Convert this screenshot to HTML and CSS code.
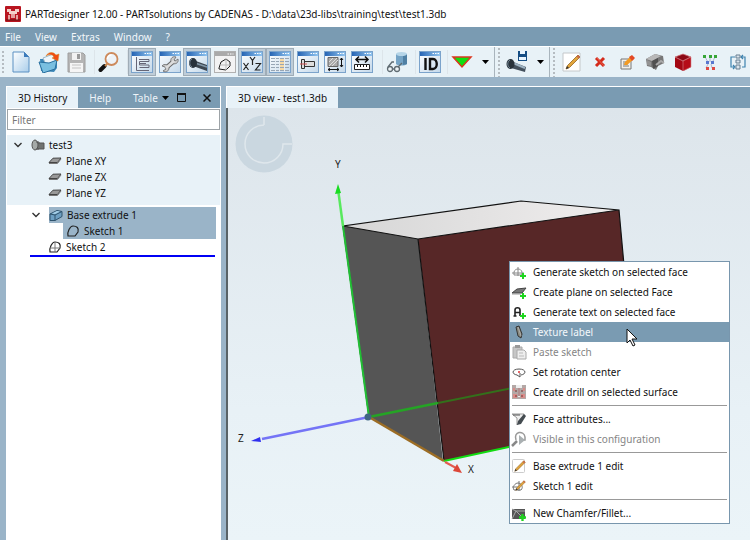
FILE: index.html
```html
<!DOCTYPE html>
<html lang="en">
<head>
<meta charset="utf-8">
<title>PARTdesigner 12.00</title>
<link rel="stylesheet" href="styles.css">
</head>
<body>
<svg class="defs" aria-hidden="true">
  <defs>
    <linearGradient id="paper" x1="0" y1="0" x2="1" y2="1"><stop offset="0" stop-color="#fff"/><stop offset="1" stop-color="#a9cdea"/></linearGradient>
    <linearGradient id="bar" x1="0" x2="1"><stop offset="0" stop-color="#2765b4"/><stop offset="1" stop-color="#8fc4f0"/></linearGradient>
    <linearGradient id="pane" x1="0" y1="0" x2="1" y2="1"><stop offset="0" stop-color="#fff"/><stop offset="1" stop-color="#c3d8ea"/></linearGradient>
    <linearGradient id="top" x1="0" x2="1"><stop offset="0" stop-color="#d6d6d6"/><stop offset="1" stop-color="#f0eeee"/></linearGradient>
    <symbol id="win" viewBox="0 0 22 22"><rect x=".5" y=".5" width="21" height="21" fill="url(#pane)" stroke="#7ba3cb"/><rect x="1" y="1" width="20" height="4" fill="url(#bar)"/><path d="M13.500 2.500h1.500m1 0h1.500m1 0h1.500" stroke="#fff"/></symbol>
    <symbol id="plus" viewBox="0 0 6 6"><path d="M3 0v6M0 3h6" stroke="#1fd51f" stroke-width="2"/></symbol>
    <symbol id="plane" viewBox="0 0 14 8"><path d="M1 5.500 5 1.200 13 1 9.500 5.500Z" fill="#999" stroke="#444"/><path d="M1 6.500 9.500 6.500 13 2" fill="none" stroke="#777"/></symbol>
    <symbol id="chev" viewBox="0 0 8 6"><path d="m.5 1 3.500 3.500L7.500 1" fill="none" stroke="#333" stroke-width="1.400"/></symbol>
    <symbol id="pencil" viewBox="0 0 16 16"><path d="m1 15 1.500-3.500L13 1l2 2L4.500 13.500Z" fill="#e2a53b" stroke="#946522" stroke-width=".800"/><path d="m11.500 2.500 2 2L15 3l-2-2Z" fill="#c96a4b"/><path d="m1 15 1-3 2 2Z" fill="#333"/></symbol>
  </defs>
</svg>
<div class="app">
  <header class="title">
    <svg width="16" height="16" viewBox="0 0 16 16"><rect width="16" height="16" rx="1" fill="#b91520"/><path d="M2 3h4v2h4V3h4v3h-2v2H4V6H2Z" fill="#f3cfc9"/><path d="M4 9v5M7 8v4M9 8v4M12 9v5" stroke="#f3cfc9" stroke-width="1.500"/><path d="M1 14h14" stroke="#601010"/></svg>
    <span>PARTdesigner 12.00 - PARTsolutions by CADENAS - D:\data\23d-libs\training\test\test1.3db</span>
  </header>
  <nav class="menubar">
    <button>File</button><button>View</button><button>Extras</button><button>Window</button><button>?</button>
  </nav>
  <div class="toolbar" role="toolbar">
    <span class="grip"></span>
    <button class="tool wide" aria-label="New"><svg width="18" height="22" viewBox="0 0 18 22"><path d="M1 1h11l5 5v15H1Z" fill="url(#paper)" stroke="#5b90c2"/><path d="M12 1v5h5Z" fill="#3c7bbb"/></svg></button>
    <button class="tool wide" aria-label="Open"><svg width="22" height="22" viewBox="0 0 22 22"><path d="M2 8h6l2-2 9-1v12l-3 4-13-1Z" fill="#3d88b8"/><path d="m5 7 10-4 3 9-9 4Z" fill="#eef6fb" stroke="#9ab6c9"/><path d="m1 11 10 1 8-3-2 9-12 4Z" fill="#79bfe0" stroke="#276e9e"/><path d="M8 5c2-4 7-5 10-1l3-1-1 7-6-3 2-1c-2-3-5-3-8-1Z" fill="#f04c13" stroke="#d68a25" stroke-width=".500"/></svg></button>
    <button class="tool" aria-label="Save"><svg width="19" height="22" viewBox="0 0 19 22"><path d="M1 2h15l2 2v17H1Z" fill="#b5b5b5" stroke="#9e9e9e"/><path d="M5 2h9v7H5Z" fill="#f2f2f2"/><path d="M10 3h3v5h-3Z" fill="#999"/><path d="M3 12h13v9H3Z" fill="#f5f5f5"/><path d="M5 14h9m-9 3h9" stroke="#c3c3c3"/></svg></button>
    <span class="sep"></span>
    <button class="tool wide" aria-label="Search"><svg width="22" height="22" viewBox="0 0 22 22"><path d="m2.500 19 4-4" stroke="#111" stroke-width="4" stroke-linecap="round"/><path d="m7 15 3-3" stroke="#c98a50" stroke-width="2"/><circle cx="13.500" cy="8" r="6" fill="#edf3f8" stroke="#cd8a5c" stroke-width="1.800"/><path d="M9.500 8a4 4 0 0 1 4-4" fill="none" stroke="#fff" stroke-width="1.500"/></svg></button>
    <span class="sep"></span>
    <button class="tool wide on" aria-label="History"><svg width="22" height="22"><use href="#win"/><path d="M5.500 6v13.500H18M8 8.500h10v2H8.500v3.500H18v2.500H8.500M9 12.500h6" fill="none" stroke="#667"/></svg></button>
    <button class="tool" aria-label="Settings"><svg width="22" height="22"><use href="#win"/><path d="m8 16 7-6" stroke="#666" stroke-width="4.500"/><path d="M3 15c2-3 7-1 7 2s-3 5-6 3l3-2-1-2ZM12 11c-1-4 2-6 5-5l-2 3 1 1 3-2c1 4-3 6-6 4Z" fill="#ccc" stroke="#666" stroke-width=".800"/><path d="m7 17 8-7" stroke="#ddd" stroke-width="2.500"/></svg></button>
    <button class="tool wide on" aria-label="Preview"><svg width="22" height="22"><use href="#win"/><path d="m7 9 14 5v6L7 15Z" fill="#3d4650"/><path d="m9 12 12 4" stroke="#8195a6" stroke-width="1.500"/><ellipse cx="7" cy="12" rx="4" ry="5" fill="#28313a"/><path d="M6 8c-3 2-3 6 0 8" fill="none" stroke="#6f8292"/></svg></button>
    <button class="tool" aria-label="Sketch"><svg width="22" height="22" viewBox="0 0 22 22"><rect x=".5" y=".5" width="21" height="21" fill="#f3f3f3" stroke="#b1b1b1"/><path d="M1 1h20v4H1Z" fill="#aaa"/><path d="M13.500 3h6" stroke="#fff" stroke-dasharray="1.500 1"/><path d="m5 17 2-6 5-3 4 3v4l-4 4-7-1Z" fill="none" stroke="#222"/><path d="M12 8v11m-6-5h10" stroke="#bbb"/></svg></button>
    <button class="tool wide on" aria-label="Axes"><svg width="22" height="22"><use href="#win"/><path d="m2.500 12 5 7m0-7-5 7M9 6l2.500 3.500L14 6m-2.500 3.500V14M14.500 12.500h5l-5 6.500h5" fill="none" stroke="#222" stroke-width="1.200"/></svg></button>
    <button class="tool wide on" aria-label="Table"><svg width="22" height="22"><use href="#win"/><path d="M11 7h5v13h-5Z" fill="#f6d9a5"/><path d="M2 7.500h18M2 10.500h18M2 13.500h18M2 16.500h18M2 19.500h18" stroke="#98a6b5"/><path d="M6.500 6v15m4-15v15m5-15v15" stroke="#e6edf3"/></svg></button>
    <button class="tool" aria-label="Part view"><svg width="22" height="22"><use href="#win"/><path d="M4.500 8.500h3v9h-3Zm3 2h10v5h-10Z" fill="#ddd" stroke="#333"/><path d="M3 13h7" stroke="#d05050"/></svg></button>
    <button class="tool" aria-label="Dimensions"><svg width="22" height="22"><use href="#win"/><path d="M4 6.500h10v9H4Z" fill="#aaa" stroke="#666"/><path d="m5 11 4-4m-4 8 8-8m-5 8 6-6" stroke="#ddd"/><path d="M17.500 7v9m-1.500-7 1.500-2L19 9m-3 5 1.500 2 1.500-2M4 18.500h11M6 17l-2 1.500L6 20m7-3 2 1.500-2 1.500" fill="none" stroke="#111"/></svg></button>
    <button class="tool" aria-label="Measure"><svg width="22" height="22"><use href="#win"/><path d="M5 8.500h12M8 5.500l-3 3 3 3m6-6 3 3-3 3" fill="none" stroke="#111" stroke-width="1.500"/><path d="M3.500 13.500h15v5h-15Z" fill="#fff" stroke="#222"/><path d="M6.500 14v2m3-2v2m3-2v2m3-2v2" stroke="#111"/></svg></button>
    <span class="sep far"></span>
    <button class="tool wide" aria-label="Inspect"><svg width="22" height="22" viewBox="0 0 22 22"><path d="M10 3v10c2 2 9 2 11 0V3Z" fill="#75a4c6"/><path d="M17 3v11l4-1V3Z" fill="#4f80a4"/><ellipse cx="15.500" cy="3" rx="5.500" ry="2" fill="#b5d5e8"/><g fill="#edf3f6" stroke="#5f6b72" stroke-width="1.300"><circle cx="4" cy="18" r="2.500"/><circle cx="11" cy="18" r="2.500"/><path d="M6.500 18h2M2 16l4-5h2m4 5 4-4" fill="none"/></g></svg></button>
    <span class="sep"></span>
    <button class="tool" aria-label="ID"><svg width="22" height="22"><use href="#win"/><path d="M6.500 7v12M11 8h3c5 0 5 10 0 10h-3Z" fill="none" stroke="#111" stroke-width="2.400"/></svg></button>
    <span class="sep"></span>
    <button class="tool wide" aria-label="Filter"><svg width="22" height="22" viewBox="0 0 22 22"><path d="M2 6h18l-9 10Z" fill="#10df10" stroke="#db371e" stroke-width="1.500"/></svg></button>
    <button class="drop" aria-label="Filter options"><svg width="7" height="4"><path d="M0 0h7L3.500 4Z"/></svg></button>
    <span class="grip edge"></span>
    <button class="tool wide" aria-label="Save part"><svg width="22" height="22" viewBox="0 0 22 22"><path d="m5 10 15 6-1 5-14-4Z" fill="#43505c"/><path d="m7 12 12 5" stroke="#9db2c2" stroke-width="2"/><ellipse cx="4.500" cy="13" rx="4" ry="5" fill="#29333b"/><path d="M4 9c-3 2-3 6 0 8" fill="none" stroke="#748896"/><path d="M12 0h9v10h-9Z" fill="#164e84"/><path d="M14 0h5v3h-5Zm-1 6h7v3h-7Z" fill="#eaf6ff"/></svg></button>
    <button class="drop" aria-label="Save options"><svg width="7" height="4"><path d="M0 0h7L3.500 4Z"/></svg></button>
    <span class="grip edge"></span>
    <button class="tool wide" aria-label="Edit"><svg width="20" height="22" viewBox="0 0 20 22"><path d="M1 2h17v18H1Z" fill="#fff" stroke="#c4c8ca"/><use href="#pencil" x="3" y="3" width="16" height="16"/></svg></button>
    <button class="tool" aria-label="Delete"><svg width="12" height="12" viewBox="0 0 12 12"><path d="m2 2 8 8m0-8-8 8" stroke="#d42b1b" stroke-width="3"/><path d="m3 2 7 8" stroke="#f0735a" stroke-width=".700"/></svg></button>
    <button class="tool wide" aria-label="Rename"><svg width="16" height="16" viewBox="0 0 16 16"><path d="M2 5h10v10H2Z" fill="#f2f1ec" stroke="#777"/><path d="M4 8h3m-3 2h5m-5 2h6" stroke="#777"/><path d="m5 11 1-3 6-6 3 3-7 6Z" fill="#f29b24"/><path d="m10 3 3-2 3 3-3 3Z" fill="#e34925"/></svg></button>
    <button class="tool wide" aria-label="Assembly"><svg width="20" height="20" viewBox="0 0 20 20"><path d="m1 7 9-5 8 2 1 7-6 3-2 4-5-3-4-1Z" fill="#777"/><path d="m1 7 6 2 9-5-6-2Z" fill="#b8b8b8"/><path d="m7 9 6-3v8l-5 3Z" fill="#505050"/><path d="m2 8 4 2v4l-4-1Z" fill="#939393"/><path d="m11 13 5-4 3 2" fill="none" stroke="#aaa" stroke-width="2"/></svg></button>
    <button class="tool" aria-label="Solid"><svg width="18" height="18" viewBox="0 0 18 18"><path d="m9 1 8 3v10l-8 4-8-4V4Z" fill="#a30713"/><path d="m9 1 8 3-8 4-8-4Z" fill="#8c0915" stroke="#d6888d" stroke-width=".800"/><path d="M9 8v10l8-4V4Z" fill="#b50c18" stroke="#d6888d" stroke-width=".600"/></svg></button>
    <button class="tool wide" aria-label="Structure"><svg width="16" height="16" viewBox="0 0 16 16"><path d="m3 3 3 5m2-5v5m5-5-3 6m-4 1-2 4m5-4 1 4" stroke="#99b" stroke-width=".700"/><g fill="#36a536"><path d="M1 1h3v3H1Zm6 0h3v3H7Zm5 0h3v3h-3Z"/></g><g fill="#5978cf"><path d="M4 7h3v3H4Zm5 0h3v3H9Z"/></g><path d="M4 13h3v3H4Zm6 0h3v3h-3Z" fill="#df4a43"/></svg></button>
    <button class="tool wide" aria-label="Arrange"><svg width="16" height="16" viewBox="0 0 16 16"><path d="M5 3H1v10h3m7-10h4v10h-3M3 11l2 2-2 2m10-14-2 2 2 2" fill="none" stroke="#3d82ae" stroke-width="1.200"/><path d="M6 1h4v3H6Zm0 5h4v3H6Zm0 5h4v4H6Z" fill="#dbe5ec" stroke="#667f91"/></svg></button>
  </div>
  <main class="work">
    <aside class="panel">
      <div class="tabs" role="tablist">
        <button class="tab active" role="tab">3D History</button>
        <button class="tab" role="tab">Help</button>
        <button class="tab last" role="tab">Table</button>
        <button class="ctl" aria-label="More tabs"><svg width="7" height="4"><path d="M0 0h7L3.500 4Z"/></svg></button>
        <button class="ctl big" aria-label="Maximize"><svg width="9" height="9"><path d="M.5 1h8v7.500h-8Z" fill="none" stroke="#111"/><path d="M0 1h9" stroke="#111" stroke-width="2"/></svg></button>
        <button class="ctl big" aria-label="Close"><svg width="8" height="8"><path d="m.5.5 7 7m0-7-7 7" stroke="#111" stroke-width="1.500"/></svg></button>
      </div>
      <input class="filter" type="text" placeholder="Filter" aria-label="Filter">
      <ul class="tree">
        <li class="root">
          <div class="row"><svg class="chev" width="8" height="6"><use href="#chev"/></svg><svg class="ico" width="14" height="14" viewBox="0 0 14 14"><path d="M5 5h8v6H5Z" fill="#8b918e" stroke="#555"/><path d="M10 5v6m2-6v6" stroke="#555"/><ellipse cx="4" cy="7" rx="3" ry="5" fill="#a5aaa8" stroke="#555"/><path d="M5 4h3v7H5" fill="none" stroke="#555"/></svg><span>test3</span></div>
          <ul class="sub">
            <li class="row"><svg class="ico" width="14" height="8"><use href="#plane"/></svg><span>Plane XY</span></li>
            <li class="row"><svg class="ico" width="14" height="8"><use href="#plane"/></svg><span>Plane ZX</span></li>
            <li class="row"><svg class="ico" width="14" height="8"><use href="#plane"/></svg><span>Plane YZ</span></li>
          </ul>
        </li>
        <li class="feature">
          <svg class="chev" width="8" height="6"><use href="#chev"/></svg>
          <div class="row selected"><svg class="ico" width="14" height="14" viewBox="0 0 14 14"><path d="m1 6 7-3.500 5 1v5L6 12.500H1Z" fill="#6d9fc2" stroke="#2f536d"/><path d="m1 6 5 1 7-3.500M6 7v5.500" fill="none" stroke="#2f536d"/><path d="m3 5.500 5-2.500 3 .5-5 2.500Z" fill="#a8d1e9"/></svg><span>Base extrude 1</span></div>
        </li>
        <li class="row selected child"><svg class="ico" width="14" height="14" viewBox="0 0 14 14"><path d="M2 12C1 8 4 2 7 2c4 0 6 2 5 6l-3 4Z" fill="none" stroke="#222" stroke-width="1.200"/></svg><span>Sketch 1</span></li>
        <li class="row item"><svg class="ico" width="14" height="14" viewBox="0 0 14 14"><path d="M2 12C1 8 4 2 7 2c4 0 6 2 5 6l-3 4Z" fill="#fff" stroke="#222" stroke-width="1.200"/><path d="M7 2v10M2 8h10" stroke="#777"/></svg><span>Sketch 2</span></li>
      </ul>
    </aside>
    <section class="view">
      <div class="tabs"><button class="tab active">3D view - test1.3db</button></div>
      <div class="canvas">
        <svg class="scene" width="522" height="432" viewBox="228 108 522 432" role="img" aria-label="3D model">
          <circle cx="264" cy="144" r="28.500" fill="#cad7e0"/>
          <path d="M264 125a19 19 0 1 0 19 19h9M264 125v-8" fill="none" stroke="#dfe7ec" stroke-width="1.500"/>
          <path d="m343 226 178-25 98 9-201 29Z" fill="url(#top)"/>
          <path d="m343 226 75 13 25 222-74-44Z" fill="#555"/>
          <path d="m418 239 201-29 19 210-194 41Z" fill="#572727"/>
          <path d="m369 417-26-191 178-25 98 9 19 210M343 226l75 13 201-29M418 239l26 222" fill="none" stroke="#111" stroke-width="1.200"/>
          <path d="m444 461 194-42" stroke="#12dc12" stroke-width="2"/>
          <path d="m369 417 69-14" stroke="#25a425" stroke-width="2.500"/><path d="m438 403 90-18" stroke="#33701b" stroke-width="2"/>
          <path d="m369 417-26-191" stroke="#22bf35" stroke-width="2"/><path d="m343 226-5-37" stroke="#58e95e" stroke-width="2.500"/><path d="m338 184-3 10 6-1Z" fill="#18dc22"/>
          <path d="m369 417 75 44" stroke="#9c6d25" stroke-width="2.500"/><path d="m445 462 13 7" stroke="#e25c50" stroke-width="2"/><path d="m462 473-9-2 4-7Z" fill="#dc4638"/>
          <path d="m369 417-107 22" stroke="#7474f6" stroke-width="2.500"/><path d="m251 441 9-4 1 5Z" fill="#3030ef"/>
          <circle cx="368" cy="417" r="3.500" fill="#3f6682"/>
          <g class="axis"><text x="335" y="168">Y</text><text x="238" y="442">Z</text><text x="468" y="473">X</text></g>
        </svg>
        <div class="popup" role="menu">
          <button role="menuitem"><svg width="16" height="16" viewBox="0 0 16 16"><path d="M3 11V8c1-4 7-4 8 0v3Zm4-8v9M1 9h12" fill="none" stroke="#888"/><use href="#plus" x="9" y="9" width="6" height="6"/></svg>Generate sketch on selected face</button>
          <button role="menuitem"><svg width="16" height="16" viewBox="0 0 16 16"><path d="m1 9 5-4 9-1-4 5Z" fill="#777" stroke="#444"/><path d="M1 10h9" stroke="#999"/><use href="#plus" x="9" y="9" width="6" height="6"/></svg>Create plane on selected Face</button>
          <button role="menuitem"><svg width="16" height="16" viewBox="0 0 16 16"><path d="M4 12V6c0-3 5-3 5 0v6M4 8.500h5M2.500 12h3" fill="none" stroke="#222" stroke-width="1.600"/><use href="#plus" x="9" y="9" width="6" height="6"/></svg>Generate text on selected face</button>
          <button role="menuitem" class="hot"><svg width="16" height="16" viewBox="0 0 16 16"><path d="m5 3 3-1 3 8-1 4-3-2Z" fill="#8c8c80" stroke="#333"/><path d="m7 3 3 9" stroke="#aaa"/></svg>Texture label</button>
          <button role="menuitem" disabled><svg width="16" height="16" viewBox="0 0 16 16"><path d="M2 3h9v11H2Z" fill="#c6c6c6" stroke="#aaa"/><path d="M4 1h5v3H4Z" fill="#999"/><path d="M6 6h7l2 2v7H6Z" fill="#eee" stroke="#aaa"/><path d="M8 9h4m-4 3h5" stroke="#bbb"/></svg>Paste sketch</button>
          <button role="menuitem"><svg width="16" height="16" viewBox="0 0 16 16"><path d="M6 11C0 10 1 5 8 5s8 5 2 6m-1-2v4l-3-2" fill="none" stroke="#555"/><circle cx="8" cy="8" r="1" fill="#d33"/></svg>Set rotation center</button>
          <button role="menuitem"><svg width="16" height="16" viewBox="0 0 16 16"><path d="M1 1h14v14H1Z" fill="#b3a8a6"/><path d="M5 1h6v3H9v9H7V4H5Z" fill="#eee"/><path d="M2 4h2v3H2Zm10 0h2v3h-2ZM2 10h4v4H2Zm8 0h4v4h-4Z" fill="#d98c89"/><path d="M8 4v8M4 12h2m4 0h2M4 7h2m4 0h2" stroke="#733"/></svg>Create drill on selected surface</button>
          <hr>
          <button role="menuitem"><svg width="16" height="16" viewBox="0 0 16 16"><path d="M1 3h12l-2 4-5 7V7Z" fill="#eee" stroke="#999"/><path d="m6 14 1-4 6-7 2 2-5 8Z" fill="#444b50"/><path d="M2 4h7" stroke="#555"/></svg>Face attributes...</button>
          <button role="menuitem" disabled><svg width="16" height="16" viewBox="0 0 16 16"><path d="m1 15 5-5" stroke="#888" stroke-width="2.500"/><path d="M5 9C2 0 13-1 14 6v3h-2" fill="none" stroke="#999" stroke-width="1.500"/><path d="M8 4v10l6-5Z" fill="#aab0b2"/></svg>Visible in this configuration</button>
          <hr>
          <button role="menuitem"><svg width="16" height="16" viewBox="0 0 16 16"><rect x="1.500" y="1.500" width="12" height="13" rx="1" fill="#fff" stroke="#ccc"/><use href="#pencil" x="3" y="2" width="12" height="12"/></svg>Base extrude 1 edit</button>
          <button role="menuitem"><svg width="16" height="16" viewBox="0 0 16 16"><path d="M3 12c-2-3 1-7 4-7s6 4 3 7Zm5-9v10M1 9h8" fill="none" stroke="#777"/><use href="#pencil" x="4" y="2" width="11" height="11"/></svg>Sketch 1 edit</button>
          <hr>
          <button role="menuitem"><svg width="16" height="16" viewBox="0 0 16 16"><path d="M1 4h13v10H1Z" fill="#555"/><path d="m1 4 4 2h9M5 6l-4 8m4-8 5 5" fill="none" stroke="#aaa"/><use href="#plus" x="8" y="9" width="7" height="7"/></svg>New Chamfer/Fillet...</button>
          <svg class="cursor" width="12" height="19" viewBox="0 0 12 19"><path d="M1 1v14l3-3 3 6 2-1-3-6h5Z" fill="#fff" stroke="#111"/></svg>
        </div>
      </div>
    </section>
  </main>
</div>
</body>
</html>
```
FILE: styles.css
```css
* { box-sizing: border-box; }
html, body { height: 100%; margin: 0; overflow: hidden; }
body { font-family: "Noto Sans", "Open Sans", sans-serif; font-size: 10px; line-height: 16px; color: #111; }
button { margin: 0; padding: 0; border: 0; background: none; font: inherit; color: inherit; white-space: nowrap; }
ul { list-style: none; margin: 0; padding: 0; }
svg { flex: none; display: block; }
.defs { position: absolute; width: 0; height: 0; }
.app { display: flex; flex-direction: column; height: 100vh; background: #9ab4c8; }

.title { display: flex; align-items: center; gap: 4px; height: 27px; padding-left: 5px; background: #fff; white-space: nowrap; }
.menubar { display: flex; gap: 14px; height: 19px; padding-left: 5px; background: #7a9bb2; color: #f3f7fa; }

.toolbar { display: flex; align-items: center; height: 31px; background: #e8f2f7; border-top: 1px solid #fff; overflow: hidden; }
.grip { flex: none; width: 7px; height: 24px; background: radial-gradient(circle, #b5bcc1 1px, transparent 1px) 0 0 / 6px 4px repeat-y; }
.grip.edge { width: 9px; height: 31px; border-left: 1px solid #a9b5bd; background-position: 1px 0; }
.sep { flex: none; width: 5px; height: 24px; border-right: 1px solid #dde5ea; }
.sep.far { width: 8px; }
.tool { flex: none; display: flex; align-items: center; justify-content: center; width: 27px; height: 28px; }
.tool.wide { width: 28px; }
.tool.on { background: #bfcdd8; border: 1px solid #a0adb7; }
.drop { flex: none; display: flex; align-items: center; justify-content: center; width: 18px; height: 28px; }

.work { display: flex; flex: 1; gap: 5px; min-height: 0; padding: 9px 0 0 6px; }
.panel { flex: none; display: flex; flex-direction: column; width: 215px; background: #fff; border: 1px solid #fff; border-bottom: 0; }
.tabs { display: flex; height: 21px; background: #7a9bb2; color: #eef4f8; }
.tab { padding: 0 11px; }
.tab.last { padding-right: 4px; }
.tab.active { background: #e8f2f8; color: #111; }
.ctl { display: flex; align-items: center; justify-content: center; width: 7px; }
.ctl.big { flex: 1; }
.filter { width: 100%; height: 21px; margin: 1px 0 5px; padding: 0 4px; border: 1px solid #9da3a7; font: inherit; background: #fff; }
.filter::placeholder { color: #777; opacity: 1; }
.tree { display: flex; flex-direction: column; }
.row { display: flex; align-items: center; height: 16px; }
.ico { width: 14px; margin-right: 4px; }
.chev { margin: 0 9px 0 7px; }
.root { padding: 2px 0 4px; background: #e8f2f8; }
.sub { padding-left: 41px; }
.feature { display: flex; align-items: center; padding: 2px 4px 0 18px; }
.feature .row { flex: 1; }
.selected { background: #9ab4c8; }
.child { margin: 0 4px 0 56px; padding-left: 3px; }
.item { height: 18px; margin: 0 5px 0 23px; padding-left: 18px; border-bottom: 2px solid #0000f5; }

.view { flex: 1; display: flex; flex-direction: column; min-width: 0; border-top: 1px solid #fff; }
.view > .tabs { border-left: 1px solid #fff; }
.canvas { position: relative; flex: 1; border-left: 2px solid #596367; background: linear-gradient(#dde5eb, #e8f1f6 70%, #ebf4f8); }
.scene { position: absolute; inset: 0 auto auto 0; }
.axis { font-size: 10px; fill: #222; }

.popup { position: absolute; top: 153px; left: 281px; width: 221px; border: 1px solid #7896ad; background: #fff; }
.popup button { display: flex; align-items: center; gap: 6px; width: 100%; height: 20px; padding-left: 1px; }
.popup button:disabled { color: #858585; }
.popup .hot { background: #7a9bb2; color: #f4f8fb; }
.popup hr { height: 1px; margin: 3px 2px; border: 0; background: #999; }
.cursor { position: absolute; top: 66px; left: 116px; }
```
